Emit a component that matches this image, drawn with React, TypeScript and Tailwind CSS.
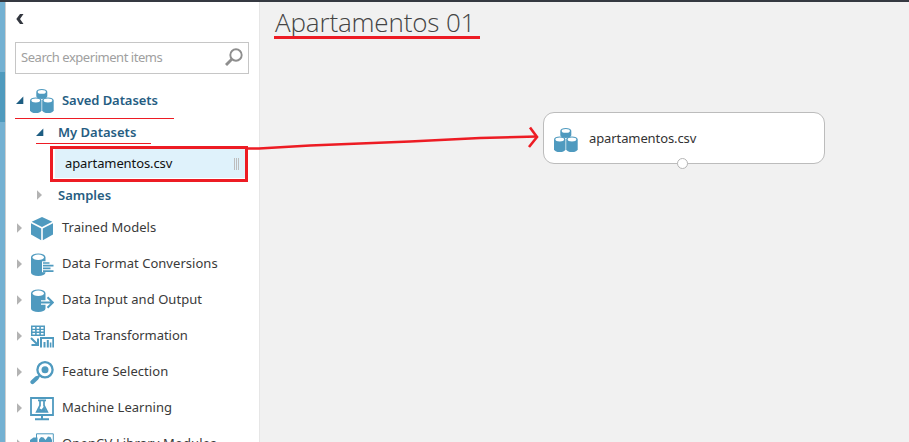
import React from "react";

const BLUE = "#4f9abf";

function Cylinder({ x, y, w, h }: { x: number; y: number; w: number; h: number }) {
  const r = w / 2;
  const ry = w * 0.25;
  return (
    <g>
      <path
        d={`M${x} ${y + ry}a${r} ${ry} 0 0 1 ${w} 0v${h - 2 * ry}a${r} ${ry} 0 0 1 ${-w} 0z`}
        fill={BLUE}
      />
      <ellipse cx={x + r} cy={y + ry + 0.2} rx={r - 1.4} ry={ry - 0.9} fill="#fff" />
    </g>
  );
}

function DatasetIcon() {
  return (
    <svg width="24" height="26" viewBox="0 0 24 26" className="shrink-0">
      <Cylinder x={6.3} y={1} w={11} h={10} />
      <Cylinder x={0} y={9.5} w={11.5} h={15.5} />
      <Cylinder x={12.2} y={9.5} w={11.5} h={15.5} />
    </svg>
  );
}

function CubeIcon() {
  return (
    <svg width="24" height="24" viewBox="0 0 24 24" fill={BLUE}>
      <path d="M12 0 22.3 4.7 12 10 1.7 4.7z" />
      <path d="M1 6.2 11.2 11.4V23.3L1 17.6z" />
      <path d="M23 6.2 12.8 11.4V23.3L23 17.6z" />
    </svg>
  );
}

function ConvertIcon() {
  return (
    <svg width="24" height="24" viewBox="0 0 24 24">
      <Cylinder x={1} y={0.5} w={14.5} h={22.5} />
      <path d="M12 8.3H24V19.2H12z" fill="#fff" />
      <path d="M13 10h6.500M13 12.700h10.500M13 15.400h7.500M13 18.100h10.500" stroke={BLUE} strokeWidth="1.700" />
    </svg>
  );
}

function InOutIcon() {
  return (
    <svg width="24" height="24" viewBox="0 0 24 24" fill="none">
      <Cylinder x={1} y={0.5} w={14.5} h={22.5} />
      <path d="M11 13.500h11M17.500 8 23 13.500l-5.500 5.500" stroke="#fff" strokeWidth="4.600" />
      <path d="M11 13.500h11.500M17.500 8.300 22.800 13.500l-5.300 5.200" stroke={BLUE} strokeWidth="2" />
    </svg>
  );
}

function TransformIcon() {
  return (
    <svg width="24" height="24" viewBox="0 0 24 24" fill={BLUE}>
      <path d="M1 0.500h14v10.500H1z" />
      <path
        d="M2.500 2h2.600v1.800H2.500zM6.700 2h2.600v1.800H6.700zM10.900 2h2.600v1.800h-2.600zM2.500 5h2.600v1.600H2.500zM6.700 5h2.600v1.600H6.700zM10.900 5h2.600v1.600h-2.600zM2.500 7.900h2.600v1.700H2.500zM6.700 7.900h2.600v1.700H6.700zM10.900 7.900h2.600v1.700h-2.600z"
        fill="#fff"
      />
      <path d="M1 13l6 6M8 13.500V20H1.500" stroke={BLUE} strokeWidth="2" fill="none" />
      <path d="M10 12h14v2H10zM10 12h2v10.500h-2zM22.300 12H24v10.500h-1.700zM13.500 17h2v5.500h-2zM16.800 15h2v7.500h-2zM19.800 17.500h1.600v5h-1.600z" />
    </svg>
  );
}

function FeatureIcon() {
  return (
    <svg width="24" height="24" viewBox="0 0 24 24" fill="none" stroke={BLUE}>
      <circle cx="15" cy="8.800" r="7.600" strokeWidth="2.300" />
      <circle cx="15" cy="8.800" r="3.500" fill={BLUE} stroke="none" />
      <path d="M9.200 14.800 6.500 17.500" strokeWidth="2.500" />
      <path d="M6.500 17.300 2.500 21" strokeWidth="4.200" strokeLinecap="round" />
    </svg>
  );
}

function LearningIcon() {
  return (
    <svg width="24" height="24" viewBox="0 0 24 24" fill="none" stroke={BLUE}>
      <path d="M1 1h22v17H1z" strokeWidth="1.800" />
      <path d="M12 18v3.500M5 22.300h14" strokeWidth="2" />
      <path d="M8 3.400h8" strokeWidth="1.800" />
      <path d="M10 3.500v5L6.700 15h10.600L14 8.500V3.500" strokeWidth="1.700" />
      <path d="M9 11 11.500 12.500 14 9.500 16.500 15h-9z" fill={BLUE} stroke="none" />
    </svg>
  );
}

function OpenCvIcon() {
  return (
    <svg width="24" height="24" viewBox="0 0 24 24" fill={BLUE}>
      <path d="M6.500 0.800H23.300V19H6.500z" fill="#fff" stroke={BLUE} strokeWidth="1" />
      <path d="M9 12V6.500L11 4l2.500 0.500L15.500 7 18 3.500l2.500 0.500L22 7v10H9z" />
      <path d="M0 10V7l3.500-2.500H7.500V14H0z" />
    </svg>
  );
}

function Arrow({ open = false }: { open?: boolean }) {
  return (
    <svg width="8" height="10" viewBox="0 0 8 10" className="shrink-0">
      {open ? <path d="M7.300 1.500v7.500H0z" fill="#1d5d82" /> : <path d="M1 0.300 6 5 1 9.700z" fill="#b3b3b3" />}
    </svg>
  );
}

const categories = [
  { label: "Trained Models", Icon: CubeIcon, spacing: "tracking-[0.04px]" },
  { label: "Data Format Conversions", Icon: ConvertIcon, spacing: "tracking-[0.04px]" },
  { label: "Data Input and Output", Icon: InOutIcon, spacing: "tracking-[0.05px]" },
  { label: "Data Transformation", Icon: TransformIcon, spacing: "tracking-[-0.04px]" },
  { label: "Feature Selection", Icon: FeatureIcon, spacing: "tracking-[0.06px]" },
  { label: "Machine Learning", Icon: LearningIcon, spacing: "tracking-[0.02px]" },
  { label: "OpenCV Library Modules", Icon: OpenCvIcon, spacing: "tracking-[0.14px]" },
];

function Sidebar() {
  return (
    <aside className="flex w-[254px] shrink-0 flex-col overflow-hidden border-l border-[#cfcfcf] bg-white">
      <div className="flex h-10 shrink-0 items-start pl-[10px] pt-3">
        <svg width="8" height="10" viewBox="0 0 8 10">
          <path d="M4 0h3.500L4 5l3.500 5H4L0.300 5z" fill="#33373f" />
        </svg>
      </div>
      <div className="ml-[9px] flex h-8 w-[234px] shrink-0 items-center justify-between border border-[#c6c6c6] pl-[5px] pr-[5px]">
        <span className="pb-px text-[13px] leading-none tracking-[-0.46px] text-[#a0a0a0]">Search experiment items</span>
        <svg width="18" height="18" viewBox="0 0 18 18" fill="none" stroke="#8e8e8e" className="mb-[3px]">
          <circle cx="11" cy="7" r="5.700" strokeWidth="1.900" />
          <path d="M7 11 1 17" strokeWidth="2.900" />
        </svg>
      </div>
      <nav className="mt-2 shrink-0 text-[13px] leading-none text-[#3a3a3a]">
        <div className="flex h-9 items-center pl-[10px] font-semibold text-[#265d82]">
          <Arrow open />
          <div className="ml-[6px] mr-[8px] pt-[2px]"><DatasetIcon /></div>
          <span className="tracking-[-0.06px]">Saved Datasets</span>
        </div>
        <div className="flex h-7 items-center pl-[30px] font-semibold text-[#265d82]">
          <Arrow open />
          <span className="ml-[14px]">My Datasets</span>
        </div>
        <div className="ml-[49px] mt-[3px] flex h-[29px] w-[190px] items-center justify-between bg-[#dff2fb] pl-[10px] pr-[6px] text-[#111]">
          <span className="tracking-[-0.1px]">apartamentos.csv</span>
          <span className="flex h-3 gap-px">
            <i className="w-px bg-[#bdbdbd]" />
            <i className="w-px bg-[#bdbdbd]" />
            <i className="w-px bg-[#bdbdbd]" />
          </span>
        </div>
        <div className="mt-px flex h-[31px] items-center pl-[30px] pt-px font-semibold text-[#265d82]">
          <Arrow />
          <span className="ml-[14px]">Samples</span>
        </div>
        {categories.map(({ label, Icon, spacing }) => (
          <div key={label} className="flex h-9 items-center pl-[10px]">
            <Arrow />
            <div className="ml-[6px] mr-[8px] pt-px"><Icon /></div>
            <span className={`whitespace-nowrap pb-px ${spacing}`}>{label}</span>
          </div>
        ))}
      </nav>
    </aside>
  );
}

function Annotations() {
  return (
    <svg width="909" height="442" viewBox="0 0 909 442" fill="none" stroke="#ed1c24" className="pointer-events-none absolute left-0 top-0">
      <path d="M15 118.500H174M36 143.500H151" strokeWidth="1" />
      <path d="M274 37.500H480" strokeWidth="3" />
      <path d="M51.500 147.500H246.500V180.500H51.500z" strokeWidth="3" />
      <path d="M248 148.500H259L310 145.500 410 141.500 480 138 537 136.500" strokeWidth="2.600" />
      <path d="M530 127.500 537 137 529 147" strokeWidth="2.600" />
    </svg>
  );
}

export default function App() {
  return (
    <div className="relative flex h-[442px] w-[909px] flex-col overflow-hidden bg-[#f1f1f1] font-['Noto_Sans','Open_Sans',sans-serif]">
      <div className="h-[2px] shrink-0 bg-[#353941]" />
      <div className="flex min-h-0 flex-1">
        <div className="w-[5px] shrink-0 bg-[#74b1d2] pt-[70px]">
          <div className="h-[50px] bg-[#4f9abd]" />
        </div>
        <Sidebar />
        <main className="flex-1 border-l border-[#e6e6e6]">
          <h1 className="ml-[15px] mt-1 h-8 font-['Open_Sans',sans-serif] text-[26px] font-light leading-8 tracking-[-0.15px] text-[#444]">Apartamentos 01</h1>
          <div className="relative ml-[283px] mt-[74px] flex h-[52px] w-[282px] items-center rounded-[11px] border-[1.500px] border-[#bcbcbc] bg-white pl-[10px]">
            <div className="mt-1"><DatasetIcon /></div>
            <span className="ml-[11px] text-[13px] leading-none tracking-[-0.1px] text-[#333]">apartamentos.csv</span>
            <i className="absolute -bottom-[6px] left-[133px] size-[11px] rounded-full border border-[#b5b5b5] bg-white" />
          </div>
        </main>
      </div>
      <Annotations />
    </div>
  );
}
